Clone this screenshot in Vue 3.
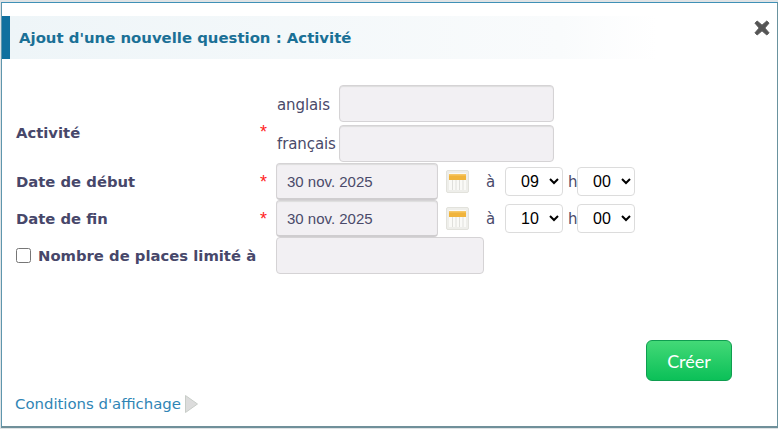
<script setup>
const rows = [
  { id: 'debut', label: 'Date de début', date: '30 nov. 2025', hour: '09', minute: '00' },
  { id: 'fin', label: 'Date de fin', date: '30 nov. 2025', hour: '10', minute: '00' }
]
const hours = ['08', '09', '10', '11']
const minutes = ['00', '15', '30', '45']
</script>

<template>
  <div class="page">
    <section class="modal">
      <button class="close" aria-label="Fermer">
        <svg width="16" height="16" viewBox="0 0 16 16"><path d="M3.2 1 8 5.2 12.8 1 15 3.2 10.8 8 15 12.8 12.8 15 8 10.8 3.2 15 1 12.8 5.2 8 1 3.2Z" fill="#555" stroke="#555" stroke-width="1" stroke-linejoin="round"/></svg>
      </button>
      <h1 class="title">Ajout d'une nouvelle question : Activité</h1>

      <form class="form" @submit.prevent>
        <div class="row activity">
          <strong class="label label-activity">Activité</strong>
          <span class="req req-activity">*</span>
          <div class="langs">
            <div class="lang lang-first"><span class="lang-name">anglais</span><input class="field lang-field" /></div>
            <div class="lang"><span class="lang-name">français</span><input class="field lang-field" /></div>
          </div>
        </div>

        <div v-for="r in rows" :key="r.id" class="row date-row">
          <strong class="label">{{ r.label }}</strong>
          <span class="req">*</span>
          <input class="field date-field" :value="r.date" />
          <span class="cal">
            <svg width="19" height="19" viewBox="0 0 19 19">
              <rect x="1" y="1" width="17" height="17" fill="#fafaf7"/>
              <rect x="1" y="2" width="17" height="6" fill="#f0b43c"/>
              <rect x="1" y="2" width="17" height="1.5" fill="#f6c766"/>
              <path d="M4.5 8v10M8 8v10M11.5 8v10M15 8v10" stroke="#e0e0dc" stroke-width="1"/>
            </svg>
          </span>
          <span class="at">à</span>
          <select class="time" :value="r.hour"><option v-for="h in hours" :key="h">{{ h }}</option></select>
          <span class="h">h</span>
          <select class="time" :value="r.minute"><option v-for="m in minutes" :key="m">{{ m }}</option></select>
        </div>

        <div class="row limit-row">
          <label class="label limit"><input type="checkbox" class="check" /><strong>Nombre de places limité à</strong></label>
          <input class="field limit-field" />
        </div>
      </form>

      <div class="actions"><button class="create">Créer</button></div>

      <a class="conditions">Conditions d'affichage
        <svg width="13" height="18" viewBox="0 0 13 18"><path d="M.5.5 12.5 9 .5 17.5Z" fill="#dcdcdc" stroke="#c8cdc8"/></svg>
      </a>
    </section>
  </div>
</template>

<style>
html, body { margin: 0; background: #fff; }
</style>

<style scoped>
.page {
  width: 778px;
  height: 429px;
  box-sizing: border-box;
  padding: 2px 0 1px 1px;
  background: #dfe3e5;
  overflow: hidden;
}
.modal {
  position: relative;
  box-sizing: border-box;
  height: 100%;
  border: 1px solid #5e96ad;
  border-top-color: #3f90b6;
  border-right-color: #6a939f;
  border-bottom: 2px solid #70909a;
  background: #fff;
  padding-top: 13px;
  display: flex;
  flex-direction: column;
  font-family: "DejaVu Sans", Verdana, sans-serif;
  color: #4a4a6a;
}
.close {
  position: absolute;
  top: 16px;
  right: 6px;
  width: 18px;
  height: 18px;
  padding: 1px;
  border: 0;
  background: none;
}
.title {
  margin: 0;
  width: 655px;
  height: 43px;
  box-sizing: border-box;
  border-left: 8px solid #10709f;
  padding-left: 9px;
  padding-top: 1px;
  font: bold 14.9px/43px "DejaVu Sans", Verdana, sans-serif;
  color: #1a7096;
  background: linear-gradient(to right, #eef5f8, #f9fbfc 85%, #fff);
}
.form {
  margin-top: 26px;
  padding-left: 14px;
  display: flex;
  flex-direction: column;
}
.row {
  display: flex;
  align-items: center;
}
.label {
  width: 260px;
  flex: none;
  font: bold 14.8px "DejaVu Sans", Verdana, sans-serif;
  color: #47476a;
}
.label-activity { margin-top: 17px; }
.req {
  position: absolute;
  left: 258px;
  color: #f22;
  font: 18px "Liberation Sans", sans-serif;
  margin-top: 1px;
}
.req-activity { margin-top: 16px; }
.field {
  box-sizing: border-box;
  height: 37px;
  border: 1px solid #d5d3d5;
  border-radius: 4px;
  background: #f2f0f3;
  color: #4a4a6a;
  font: 15px "Liberation Sans", sans-serif;
  padding: 0 10px;
  outline: 0;
}
.langs { display: flex; flex-direction: column; gap: 3px; padding-bottom: 1px; }
.lang { display: flex; align-items: center; }
.lang-name { width: 63px; font-size: 15px; padding-left: 1px; box-sizing: border-box; letter-spacing: -0.1px; }
.lang-first .lang-name { padding-top: 2px; }
.lang-field { width: 215px; box-shadow: inset 0 1px 1px #ddd; }
.date-row { height: 37px; }
.date-field { width: 162px; box-shadow: inset 0 1px 1px #ddd; border-bottom: 2px solid #cfcdcf; }
.cal {
  margin-left: 8px;
  width: 23px;
  height: 23px;
  box-sizing: border-box;
  padding: 1px;
  border: 1px solid #e2e2dc;
  background: #eeeeea;
  border-radius: 2px;
  display: flex;
}
.at { width: 36px; box-sizing: border-box; padding-left: 17px; font-size: 15px; }
.time {
  box-sizing: border-box;
  width: 58px;
  height: 29px;
  padding: 0 7px 0 11px;
  border: 1px solid #dcdcdc;
  border-radius: 4px;
  background: #fff;
  color: #000;
  font: 16px "Liberation Sans", sans-serif;
}
.h { width: 14px; padding-left: 5px; box-sizing: border-box; font-size: 15px; }
.limit-row { height: 37px; }
.limit { display: flex; align-items: center; }
.check {
  width: 15px;
  height: 15px;
  margin: 0 7px 0 0;
}
.limit-field { width: 208px; }
.actions {
  display: flex;
  justify-content: flex-end;
  margin-top: 66px;
  padding-right: 45px;
}
.create {
  width: 86px;
  height: 41px;
  border: 1px solid #0f9d50;
  border-radius: 6px;
  background: linear-gradient(#43d977, #0bc058);
  color: #fff;
  font: 18px Lato, sans-serif;
}
.conditions {
  margin-top: 14px;
  margin-left: 13px;
  display: flex;
  align-items: center;
  gap: 4px;
  color: #3085b5;
  font: 14.9px "DejaVu Sans", Verdana, sans-serif;
}
</style>
